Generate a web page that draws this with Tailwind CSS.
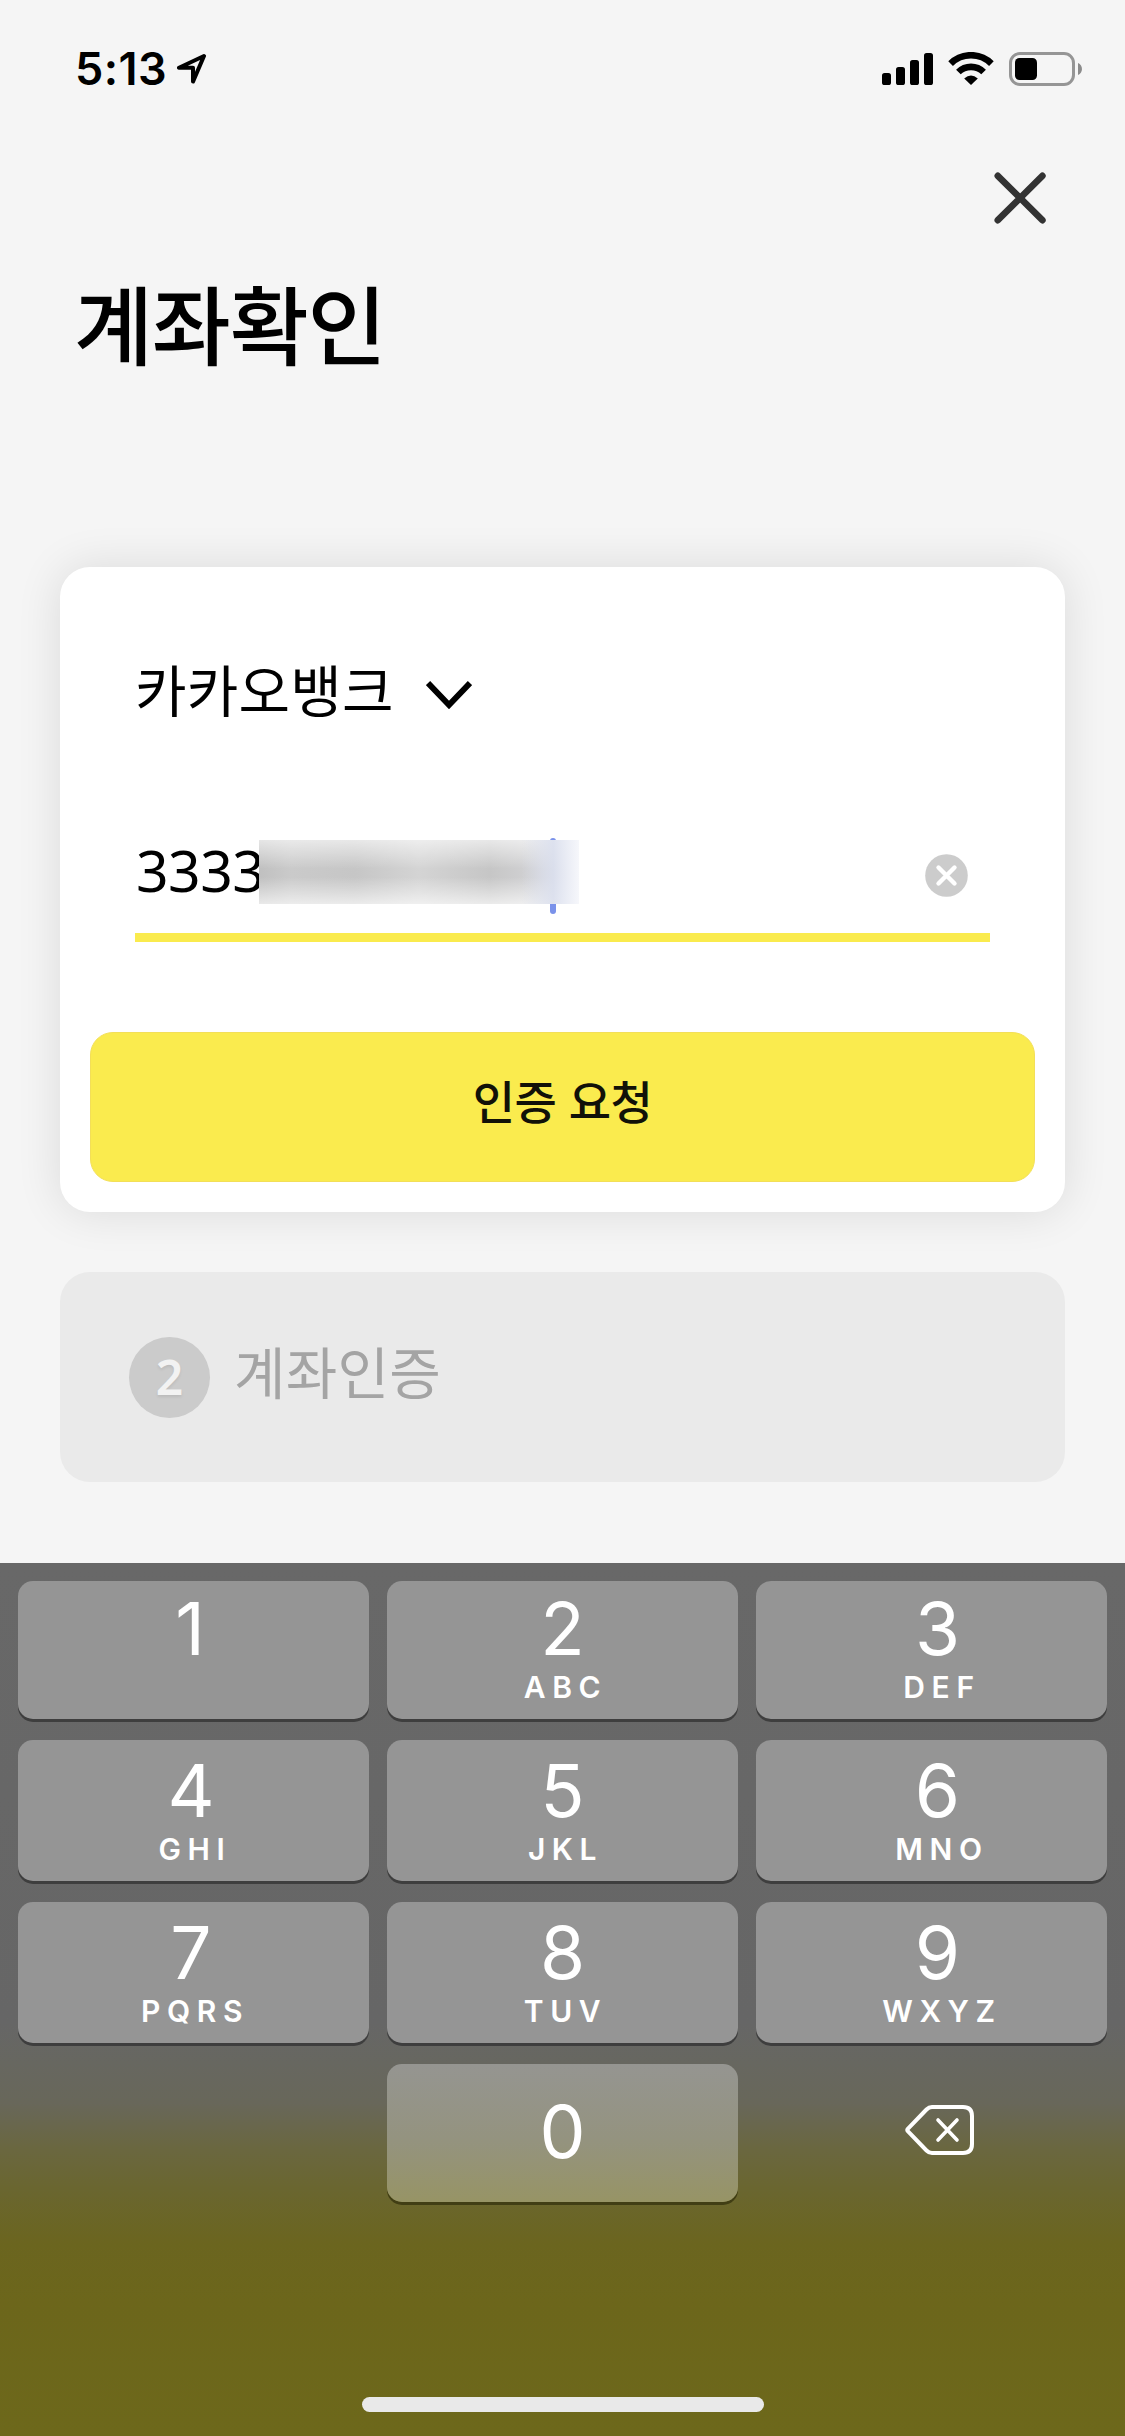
<!DOCTYPE html>
<html lang="ko">
<head>
<meta charset="utf-8">
<meta name="viewport" content="width=device-width, initial-scale=1">
<title>계좌확인</title>
<script src="https://cdn.jsdelivr.net/npm/@tailwindcss/browser@4"></script>
</head>
<body class="bg-[#f5f5f5]">
<div class="flex flex-col w-[1125px] h-[2436px] overflow-hidden bg-[#f5f5f5] text-black font-['Noto_Sans_CJK_KR',sans-serif]">

  <!-- status bar -->
  <header class="flex h-[138px] shrink-0 justify-between pl-[75px] pr-[42px] pt-[42px]">
    <div class="flex h-[54px] items-center font-['Inter',sans-serif] text-[45px] leading-[54px] font-semibold">
      <span class="w-[102px] tracking-[0.4px]">5:13</span>
      <svg class="w-[30px] h-[32px]" viewBox="0 0 30 32" fill="none" stroke="black" stroke-width="4" stroke-linejoin="round"><path d="M27 3 L2 14.8 H16 V28.6 Z"/></svg>
    </div>
    <div class="flex h-[54px] items-start pt-[10px]">
      <svg class="w-[51px] h-[34px] mr-[15px]" viewBox="0 0 51 34"><rect x="0" y="21" width="9" height="12" rx="2.6"/><rect x="14" y="15" width="9" height="18" rx="2.6"/><rect x="28" y="8" width="9" height="25" rx="2.6"/><rect x="42" y="1" width="9" height="32" rx="2.6"/></svg>
      <svg class="w-[46px] h-[34px] mr-[15px]" viewBox="0 0 46 34" fill="none" stroke="black" stroke-width="6.6"><path d="M2.6 11.6 A29 29 0 0 1 43.4 11.6"/><path d="M10.4 20 A18 18 0 0 1 35.6 20"/><path d="M16.2 26.4 Q23 20.6 29.8 26.4 L23 33 Z" fill="black" stroke="none"/></svg>
      <svg class="w-[74px] h-[34px]" viewBox="0 0 74 34"><rect x="1.5" y="1.5" width="63" height="31" rx="9.5" fill="none" stroke="#959595" stroke-width="3"/><rect x="6" y="6" width="22" height="22" rx="4.5"/><path d="M69 11 C74.3 13 74.3 21 69 23 Z" fill="#8b8b8b"/></svg>
    </div>
  </header>

  <div class="flex h-[120px] shrink-0 justify-end pr-[78px] pt-[33px]">
    <svg class="w-[54px] h-[54px]" viewBox="0 0 54 54" stroke="#333" stroke-width="6.6" stroke-linecap="round"><path d="M4.8 4.8 L49.4 49.2 M49.4 4.8 L4.8 49.2"/></svg>
  </div>

  <h1 class="h-[309px] shrink-0 pl-[74px] pt-[4px] text-[86px] leading-[120px] font-medium tracking-[-1.3px] whitespace-nowrap">계좌확인</h1>

  <!-- step 1 : bank and account number -->
  <section class="mx-[60px] flex h-[645px] shrink-0 flex-col rounded-[30px] bg-white px-[30px] shadow-[0_0_46px_rgba(0,0,0,0.11)]">
    <div class="ml-[45px] mt-[81px] flex h-[80px] items-center text-[56px] leading-[80px]">
      <span class="w-[291px] tracking-[0.2px] whitespace-nowrap font-normal">카카오뱅크</span>
      <svg class="mt-[13px] w-[46px] h-[30px]" viewBox="0 0 46 30" fill="none" stroke="black" stroke-width="6"><path d="M2 3 L23 25 L44 3"/></svg>
    </div>
    <div class="relative mx-[45px] mt-[100px] flex h-[114px] items-start justify-between border-b-[9px] border-[#faeb4e] pr-[22px]">
      <span class="pl-px pt-[4px] font-['Noto_Sans',sans-serif] text-[57px] leading-[76px] tracking-[-0.5px]">3333</span>
      <svg class="mt-[26px] w-[43px] h-[43px]" viewBox="0 0 43 43"><circle cx="21.5" cy="21.5" r="21.3" fill="#ccc"/><path d="M13.5 13.5 L29.5 29.5 M29.5 13.5 L13.5 29.5" stroke="white" stroke-width="4.4" stroke-linecap="round"/></svg>
      <i class="absolute left-[415px] top-[10px] block h-[76px] w-[6px] rounded-full bg-[#7a92ea]"></i>
      <!-- masked digits -->
      <i class="absolute left-[124px] top-[12px] block h-[64px] w-[320px] bg-[linear-gradient(90deg,transparent_82%,rgba(218,223,238,0.85)_92%,#f6f7fb_100%),linear-gradient(180deg,rgba(255,255,255,0.6),transparent_45%,transparent_58%,rgba(255,255,255,0.65)),linear-gradient(90deg,#c0c0c0,#cacaca_10%,#c6c6c6_30%,#d4d4d4_50%,#c6c6c6_72%,#d2d2d4_86%,#e4e4ec)]"></i>
    </div>
    <button class="mt-[90px] h-[150px] rounded-[23px] border-[1.5px] border-[#f3df58] bg-[#faeb4e] pb-[16px] text-center text-[46px] leading-[60px] font-medium text-[#111108]"><span class="tracking-[-0.5px]">인증 요청</span></button>
  </section>

  <!-- step 2 -->
  <section class="mx-[60px] mt-[60px] flex h-[210px] shrink-0 items-center rounded-[30px] bg-[#eaeaea] pl-[69px]">
    <span class="flex size-[81px] items-center justify-center rounded-full bg-[#cbcbcb] font-['Noto_Sans',sans-serif] text-[48px] leading-none font-semibold text-[#f2f2f2] [text-shadow:0_2px_3px_rgba(0,0,0,0.08)]">2</span>
    <span class="ml-[24px] pb-[14px] text-[56px] leading-[80px] tracking-[0.2px] whitespace-nowrap text-[#a4a4a4]">계좌인증</span>
  </section>

  <!-- number pad -->
  <section class="relative mt-[81px] h-[873px] shrink-0 bg-[linear-gradient(180deg,#686868_0px,#666666_460px,#676760_500px,#68675a_540px,#6a6740_585px,#6a6630_625px,#6b651f_680px,#6c661b_740px,#6d681b_873px)] font-['Inter',sans-serif] text-white">
    <div class="grid grid-cols-3 grid-rows-[138px_141px_141px_138px] gap-x-[18px] gap-y-[21px] px-[18px] pt-[18px]">
      <button class="flex flex-col items-center rounded-[15px] bg-[#959595] pt-[4px] pr-[7px] shadow-[0_3px_0_#3e3e3e]"><span class="text-[73px] leading-[88px]">1</span></button>
      <button class="flex flex-col items-center rounded-[15px] bg-[#959595] pt-[4px] shadow-[0_3px_0_#3e3e3e]"><span class="text-[73px] leading-[88px]">2</span><span class="-mt-[4px] pl-[6px] text-[30px] leading-[36px] font-semibold tracking-[6.6px]">ABC</span></button>
      <button class="flex flex-col items-center rounded-[15px] bg-[#959595] pt-[4px] pl-[12px] shadow-[0_3px_0_#3e3e3e]"><span class="text-[73px] leading-[88px]">3</span><span class="-mt-[4px] pl-[9px] text-[30px] leading-[36px] font-semibold tracking-[6.6px]">DEF</span></button>
      <button class="flex flex-col items-center rounded-[15px] bg-[#959595] pt-[7px] pr-[5px] shadow-[0_3px_0_#3e3e3e]"><span class="text-[73px] leading-[88px]">4</span><span class="-mt-[4px] pl-[8px] text-[30px] leading-[36px] font-semibold tracking-[6.6px]">GHI</span></button>
      <button class="flex flex-col items-center rounded-[15px] bg-[#959595] pt-[7px] shadow-[0_3px_0_#3e3e3e]"><span class="text-[73px] leading-[88px]">5</span><span class="-mt-[4px] pl-[6px] text-[30px] leading-[36px] font-semibold tracking-[6.6px]">JKL</span></button>
      <button class="flex flex-col items-center rounded-[15px] bg-[#959595] pt-[7px] pl-[12px] shadow-[0_3px_0_#3e3e3e]"><span class="text-[73px] leading-[88px]">6</span><span class="-mt-[4px] pl-[9px] text-[30px] leading-[36px] font-semibold tracking-[6.6px]">MNO</span></button>
      <button class="flex flex-col items-center rounded-[15px] bg-[#959595] pt-[7px] pr-[5px] shadow-[0_3px_0_#3e3e3e]"><span class="text-[73px] leading-[88px]">7</span><span class="-mt-[4px] pl-[8px] text-[30px] leading-[36px] font-semibold tracking-[6.6px]">PQRS</span></button>
      <button class="flex flex-col items-center rounded-[15px] bg-[#959595] pt-[7px] shadow-[0_3px_0_#3e3e3e]"><span class="text-[73px] leading-[88px]">8</span><span class="-mt-[4px] pl-[6px] text-[30px] leading-[36px] font-semibold tracking-[6.6px]">TUV</span></button>
      <button class="flex flex-col items-center rounded-[15px] bg-[#959595] pt-[7px] pl-[12px] shadow-[0_3px_0_#3e3e3e]"><span class="text-[73px] leading-[88px]">9</span><span class="-mt-[4px] pl-[9px] text-[30px] leading-[36px] font-semibold tracking-[6.6px]">WXYZ</span></button>
      <button class="col-start-2 flex flex-col items-center rounded-[15px] bg-[linear-gradient(180deg,#959591,#94937f_55%,#979465)] pt-[24px] shadow-[0_3px_0_#413e14]"><span class="text-[73px] leading-[88px]">0</span></button>
      <button class="flex justify-center pt-[39px] pl-[16px]">
        <svg class="w-[70px] h-[54px]" viewBox="0 0 70 54" fill="none" stroke="white" stroke-width="4" stroke-linecap="round" stroke-linejoin="round"><path d="M27 4 H58 Q67 4 67 13 V41 Q67 50 58 50 H27 Q24 50 21.5 47.5 L2.8 28.2 Q1.8 27 2.8 25.8 L21.5 6.5 Q24 4 27 4 Z"/><path d="M33 17 L52 37 M52 17 L33 37" stroke-width="3.6"/></svg>
      </button>
    </div>
    <i class="absolute left-[362px] top-[834px] block h-[15px] w-[402px] rounded-full bg-[#e9e9e9]"></i>
  </section>
</div>
</body>
</html>
